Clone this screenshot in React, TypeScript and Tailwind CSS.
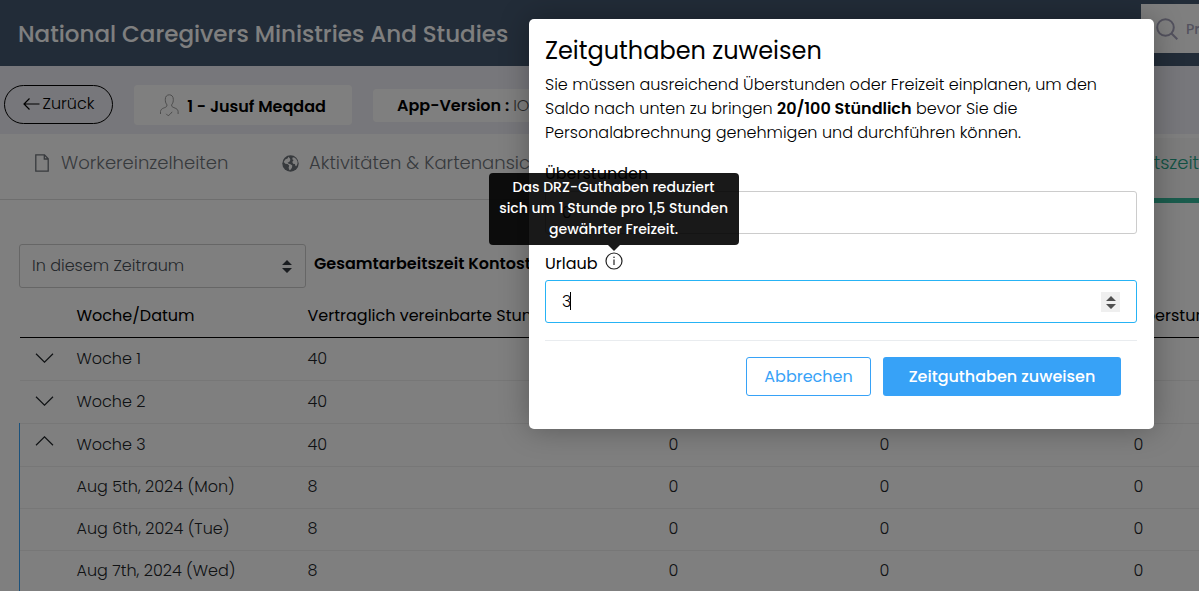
import React from 'react';

type Row = {
  label: string;
  hours: number;
  kind: 'closed' | 'open' | 'day';
};

const rows: Row[] = [
  { label: 'Woche 1', hours: 40, kind: 'closed' },
  { label: 'Woche 2', hours: 40, kind: 'closed' },
  { label: 'Woche 3', hours: 40, kind: 'open' },
  { label: 'Aug 5th, 2024 (Mon)', hours: 8, kind: 'day' },
  { label: 'Aug 6th, 2024 (Tue)', hours: 8, kind: 'day' },
  { label: 'Aug 7th, 2024 (Wed)', hours: 8, kind: 'day' },
];

const UpDown: React.FC<{ className?: string }> = ({ className }) => (
  <svg viewBox="0 0 10 13" className={className} fill="currentColor" aria-hidden="true">
    <path d="M5 0l5 5H0zM5 13l5-5H0z" />
  </svg>
);

const ArrowLeftIcon: React.FC = () => (
  <svg width="17" height="12" viewBox="0 0 17 12" fill="none" stroke="currentColor" strokeWidth="1.2" aria-hidden="true">
    <path d="M16.500 6H1M6.500 .5L1 6l5.500 5.500" />
  </svg>
);

const PersonIcon: React.FC = () => (
  <svg width="19" height="23" viewBox="0 0 19 23" fill="none" stroke="#9a9a9a" strokeWidth="1" aria-hidden="true">
    <path d="M.5 20v-2.500c.3-2 1.500-2.800 3-3.400 1.800-.7 3-1.100 3.400-2.100.2-.8 0-1.500-.4-2C5.600 9 5.300 7.500 5.300 5.300 5.300 2.500 6.900.8 9.300.8s4 1.700 4 4.500c0 2.200-.3 3.700-1.200 4.700-.4.500-.6 1.200-.4 2 .4 1 1.600 1.400 3.400 2.100 1.500.6 2.700 1.400 3 3.400V20" />
    <path d="M6.200 19.800l2 2c1.500-1 2.800-2.400 4-4" />
  </svg>
);

const FileIcon: React.FC = () => (
  <svg width="14" height="18" viewBox="0 0 14 18" className="shrink-0" fill="none" stroke="currentColor" strokeWidth="1.300" aria-hidden="true">
    <path d="M.8.8h8.700l3.700 4V17.200H.8zM9.300.8V5h3.900" />
  </svg>
);

const GlobeIcon: React.FC = () => (
  <svg width="17" height="17" viewBox="0 0 17 17" className="shrink-0" aria-hidden="true">
    <circle cx="8.500" cy="8.500" r="8.200" fill="currentColor" />
    <path
      d="M6.500 1.700l-1 1.800-2.300 1L1.700 7l1.600 1.700 2.200.3 1.700 1.500-.6 2.200.9 2.600 1.300-.7 1.200-2.200.3-1.800-1.800-1.400-2.300-.6-.6-1.200 1.600-.5 1.200-1.900-.6-1.800zM10.800 2.200l-.6 2 1.400.9-1.300 1.800.8 1.800 1.800.3.600 1.900.8.300 1.200-2.400V6.500l-1.200-2.300-1.600-1.500z"
      fill="#fff"
    />
  </svg>
);

const SearchIcon: React.FC = () => (
  <svg width="22" height="22" viewBox="0 0 22 22" className="shrink-0" fill="none" stroke="currentColor" strokeWidth="2" aria-hidden="true">
    <circle cx="9.500" cy="9.500" r="8.300" />
    <path d="M15.300 15.300l6 6" />
  </svg>
);

const InfoIcon: React.FC = () => (
  <svg width="18" height="18" viewBox="0 0 18 18" fill="none" stroke="#222" strokeWidth="1.200" aria-hidden="true">
    <circle cx="9" cy="9" r="8" />
    <path d="M9 7.500v5.500" strokeWidth="1.200" />
    <circle cx="9" cy="5.300" r=".8" fill="#222" stroke="none" />
  </svg>
);

const Header: React.FC = () => (
  <header className="flex h-[66px] items-start justify-between bg-[#445870]">
    <h1 className="pl-[18px] pt-4 text-[23px] font-medium leading-9 text-white">
      National Caregivers Ministries And Studies
    </h1>
    <label className="mt-1 flex h-[49px] w-[58px] items-center gap-2 overflow-hidden bg-white pl-[15px] text-[#a7a4bd]">
      <SearchIcon />
      <input
        type="text"
        aria-label="Suche"
        placeholder="Pr"
        className="w-full min-w-0 text-sm font-medium outline-none placeholder:text-[#a7a4bd]"
      />
    </label>
  </header>
);

const WorkerBar: React.FC = () => (
  <div className="flex h-[68px] items-start gap-[21px] bg-[#efeff6] pl-1 pt-[19px]">
    <button className="flex h-[39px] w-[109px] items-center justify-center gap-[3px] rounded-full border border-black pb-[2px] text-base font-light text-black">
      <ArrowLeftIcon />
      Zurück
    </button>
    <div className="flex h-10 w-[218px] items-center justify-center gap-2 rounded bg-white">
      <PersonIcon />
      <span className="pt-[3px] text-base font-semibold">1 - Jusuf Meqdad</span>
    </div>
    <div className="mt-1 flex h-[33px] w-[240px] items-center gap-1 rounded bg-white pl-6 text-base">
      <span className="font-semibold">App-Version :</span>
      <span className="font-light text-[#555]">IOS</span>
    </div>
  </div>
);

const Tabs: React.FC = () => (
  <nav className="flex h-[66px] items-start border-b border-[#dddddd] pl-[35px] text-lg font-light text-[#6f747b]">
    <a href="#details" className="flex h-[58px] w-[247px] items-center gap-3">
      <FileIcon />
      Workereinzelheiten
    </a>
    <a href="#activity" className="flex h-[58px] items-center gap-[10px] whitespace-nowrap">
      <GlobeIcon />
      Aktivitäten &amp; Kartenansicht
    </a>
    <a
      href="#hours"
      className="ml-auto mt-1 flex h-[65px] items-center border-b-[5px] border-[#34b99a] bg-[#f8f8f8] pb-[10px] pl-8 text-[#22a386]"
    >
      Arbeitszeit
    </a>
  </nav>
);

const HoursTable: React.FC = () => (
  <table className="mt-1 w-full table-fixed border-collapse text-left text-base">
    <colgroup>
      <col className="w-[45px]" />
      <col className="w-[231px]" />
      <col className="w-[361px]" />
      <col className="w-[211px]" />
      <col className="w-[254px]" />
      <col />
    </colgroup>
    <thead>
      <tr className="h-[45px] whitespace-nowrap border-b border-black">
        <th />
        <th className="px-3 pt-[3px] font-normal">Woche/Datum</th>
        <th className="px-3 pt-[3px] font-normal">Vertraglich vereinbarte Stunden</th>
        <th className="px-3 pt-[3px] font-normal">Gesamt</th>
        <th className="px-3 pt-[3px] font-normal">Urlaub</th>
        <th className="px-3 pt-[3px] font-normal">Überstunden</th>
      </tr>
    </thead>
    <tbody className="font-light text-[#212529]">
      {rows.map((row) => (
        <tr
          key={row.label}
          className={row.kind === 'day' ? 'h-[42px] border-b border-[#eeeeee]' : 'h-[43px] border-b border-[#eeeeee]'}
        >
          <td className={row.kind === 'closed' ? 'pl-[15px]' : 'border-l border-[#37a2f7] pl-[15px]'}>
            {row.kind !== 'day' && (
              <button aria-label={row.label} className={row.kind === 'closed' ? 'block pb-[2px]' : 'block pb-2'}>
                <svg
                  width="19"
                  height="10"
                  viewBox="0 0 19 10"
                  fill="none"
                  stroke="currentColor"
                  strokeWidth="1.200"
                  aria-hidden="true"
                >
                  <path d={row.kind === 'closed' ? 'M1 .8l8.500 8.400L18 .8' : 'M1 9.200L9.500.8 18 9.200'} />
                </svg>
              </button>
            )}
          </td>
          <td className="px-3">{row.label}</td>
          <td className="px-3">{row.hours}</td>
          <td className="px-3">0</td>
          <td className="px-3">0</td>
          <td className="px-3">0</td>
        </tr>
      ))}
    </tbody>
  </table>
);

const Hours: React.FC = () => (
  <section className="pl-[19px] pt-11">
    <div className="flex items-center gap-2">
      <div className="relative">
        <select
          aria-label="Zeitraum"
          className="block h-11 w-[287px] appearance-none rounded-[3px] border border-[#cccccc] bg-white px-3 text-base font-light text-[#495057]"
        >
          <option>In diesem Zeitraum</option>
        </select>
        <UpDown className="pointer-events-none absolute right-[14px] top-4 h-[13px] w-[10px] text-[#343a40]" />
      </div>
      <strong className="pb-1 text-base font-semibold">Gesamtarbeitszeit Kontostand</strong>
    </div>
    <HoursTable />
  </section>
);

const InfoTip: React.FC = () => (
  <span className="relative inline-flex">
    <InfoIcon />
    <span
      role="tooltip"
      className="absolute bottom-full left-1/2 mb-[7px] w-[250px] -translate-x-1/2 rounded bg-black/90 pb-[5px] pt-1 text-center text-sm font-medium leading-[21px] text-white"
    >
      Das DRZ-Guthaben reduziert
      <br />
      sich um 1 Stunde pro 1,5 Stunden
      <br />
      gewährter Freizeit.
      <svg viewBox="0 0 12 6" className="absolute left-1/2 top-full h-[6px] w-3 -translate-x-1/2" aria-hidden="true">
        <path d="M0 0h12L6 6z" fill="#000" fillOpacity=".9" />
      </svg>
    </span>
  </span>
);

const AssignDialog: React.FC = () => (
  <div
    role="dialog"
    aria-labelledby="dialog-title"
    className="w-[625px] rounded-[5px] bg-white pb-[33px] pl-4 pr-[17px] pt-[14px] shadow-[0_0_30px_rgba(0,0,0,0.3)]"
  >
    <h2 id="dialog-title" className="text-2xl leading-9">
      Zeitguthaben zuweisen
    </h2>
    <p className="mt-1 text-base font-light leading-6">
      Sie müssen ausreichend Überstunden oder Freizeit einplanen, um den
      <br />
      Saldo nach unten zu bringen <b className="font-semibold">20/100 Stündlich</b> bevor Sie die
      <br />
      Personalabrechnung genehmigen und durchführen können.
    </p>

    <label htmlFor="overtime" className="mt-[17px] block text-base leading-6">
      Überstunden
    </label>
    <input
      id="overtime"
      type="text"
      defaultValue="0"
      className="mt-[5px] block h-[43px] w-full rounded-[3px] border border-[#cccccc] px-4 text-base font-light outline-none"
    />

    <div className="mt-[18px] flex gap-[7px] text-base leading-6">
      <label htmlFor="leave">Urlaub</label>
      <InfoTip />
    </div>
    <div className="relative mt-1">
      <input
        id="leave"
        type="text"
        inputMode="numeric"
        defaultValue="3"
        className="block h-[43px] w-full rounded-[3px] border border-[#26b3f5] px-4 text-base font-light outline-none"
      />
      <span className="absolute left-[25px] top-3 h-[18px] w-px bg-black" />
      <span className="absolute right-[17px] top-3 flex h-5 w-[19px] items-center justify-center bg-[#efefef] text-[#505050]">
        <UpDown className="h-[13px] w-[10px]" />
      </span>
    </div>

    <div className="mt-[17px] flex justify-end gap-3 border-t border-[#e9ecef] pr-4 pt-4">
      <button className="h-[39px] w-[125px] rounded-[3px] border border-[#37a2f7] text-base text-[#37a2f7]">
        Abbrechen
      </button>
      <button className="h-[39px] w-[238px] rounded-[3px] bg-[#37a2f7] text-base font-medium text-white">
        Zeitguthaben zuweisen
      </button>
    </div>
  </div>
);

const App: React.FC = () => {
  return (
    <div className="relative min-h-screen overflow-hidden bg-white font-['Poppins',Inter,sans-serif] text-black">
      <Header />
      <WorkerBar />
      <Tabs />
      <Hours />
      <div className="absolute inset-0 flex items-start justify-end bg-black/50 pr-[45px] pt-[19px]">
        <AssignDialog />
      </div>
    </div>
  );
};

export default App;
